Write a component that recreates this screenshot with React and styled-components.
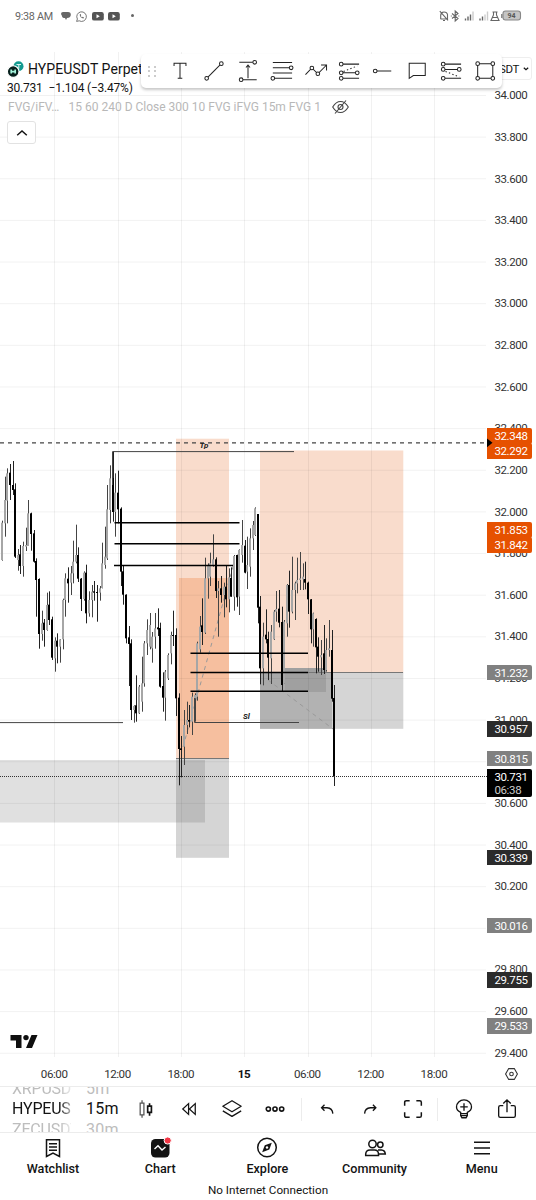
import React from "react";
import styled, { createGlobalStyle, css } from "styled-components";

const GlobalStyle = createGlobalStyle`
  * {
    box-sizing: border-box;
  }
  body {
    margin: 0;
    background: #fff;
    color: #131313;
    font-family: Roboto, "Liberation Sans", sans-serif;
  }
`;

const Page = styled.div`
  display: flex;
  flex-direction: column;
  width: 536px;
  height: 1200px;
  overflow: hidden;
  background: #fff;
`;

const StatusBar = styled.header`
  display: flex;
  justify-content: space-between;
  align-items: center;
  height: 32px;
  padding: 0 15px 0 15px;
  color: #666;
  flex: none;
`;

const StatusGroup = styled.div`
  display: flex;
  align-items: center;
  gap: ${(p) => p.$gap}px;
`;

const Clock = styled.span`
  font-size: 10.8px;
  letter-spacing: -0.3px;
  width: 40px;
  margin-right: 0.5px;
  white-space: nowrap;
`;

const Glyph = styled.svg`
  display: block;
  flex: none;
  fill: none;
  stroke: currentColor;
  stroke-width: ${(p) => p.$weight || 1.1};
  overflow: visible;
`;

const ChartArea = styled.main`
  position: relative;
  height: 1054px;
  flex: none;
`;

const Plot = styled.svg`
  display: block;
  position: absolute;
  left: 0;
  top: 0;
`;

const Legend = styled.section`
  position: relative;
  display: flex;
  flex-direction: column;
  align-items: flex-start;
  padding: 28px 0 0 7px;
`;

const SymbolRow = styled.div`
  display: flex;
  align-items: center;
  gap: 4px;
  height: 18px;
  font-size: 14px;
  letter-spacing: 0.07px;
  white-space: nowrap;
`;

const QuoteRow = styled.div`
  display: flex;
  gap: 6px;
  height: 18px;
  line-height: 20px;
  font-size: 12px;
  letter-spacing: -0.22px;
  white-space: pre;
`;

const StudyRow = styled.div`
  display: flex;
  align-items: center;
  height: 21px;
  padding-left: 1px;
  font-size: 12px;
  color: #b8b8b8;
  white-space: nowrap;
`;

const StudyName = styled.span`
  width: 60.5px;
`;

const StudyInputs = styled.span`
  width: 263.5px;
`;

const CollapseButton = styled.button`
  display: grid;
  place-items: center;
  width: 29px;
  height: 23px;
  margin-top: 4px;
  padding: 0;
  border: 1px solid #e2e2e2;
  border-radius: 3px;
  background: #fff;
  color: #131313;
`;

const DrawingBar = styled.div`
  position: absolute;
  left: 141px;
  top: 22px;
  width: 361px;
  height: 34px;
  display: flex;
  align-items: center;
  padding: 0 0 0 6px;
  border-radius: 5px;
  background: #fff;
  box-shadow: 0 2px 3px rgba(0, 0, 0, 0.22);
  color: #222;
`;

const ToolButton = styled.span`
  display: grid;
  place-items: center;
  width: 33.9px;
  height: 28px;
`;

const Handle = styled.span`
  display: grid;
  grid-template-columns: repeat(2, 2px);
  gap: 2.5px 4px;
  margin: 0 7px 0 1px;
  i {
    width: 2px;
    height: 2px;
    border-radius: 1px;
    background: #bbb;
  }
`;

const Currency = styled.div`
  position: absolute;
  right: 4px;
  top: 25px;
  width: 60px;
  height: 23px;
  display: flex;
  align-items: center;
  justify-content: flex-end;
  gap: 4px;
  padding-right: 2px;
  border: 1px solid #eee;
  border-radius: 3px;
  font-size: 11.5px;
  letter-spacing: -0.4px;
`;

const PriceScale = styled.div`
  position: absolute;
  right: 0;
  top: 43.3px;
  width: 50px;
  padding-left: 8.4px;
`;

const PriceTick = styled.div`
  height: 41.64px;
  line-height: 41.64px;
  font-size: 11.5px;
  letter-spacing: -0.4px;
  color: #333;
`;

const tones = { orange: "#e65100", grey: "#808080", dark: "#2b2b2b", black: "#000" };

const PriceTag = styled.div`
  position: absolute;
  left: 487px;
  top: ${(p) => p.$y - 32}px;
  width: 44.5px;
  height: ${(p) => (p.$tall ? 28 : 15.4)}px;
  padding-left: 7.4px;
  border-radius: 0 2px 2px 0;
  background: ${(p) => tones[p.$tone]};
  color: #fff;
  font-size: 11.5px;
  line-height: 16.8px;
  letter-spacing: -0.35px;
  ${(p) =>
    p.$tall &&
    css`
      line-height: 13px;
      padding-top: 1.5px;
    `}
  small {
    display: block;
    font-size: 11.5px;
    color: #ccc;
  }
`;

const TimeScale = styled.div`
  position: absolute;
  left: 22.5px;
  right: 0;
  bottom: 0;
  height: 25px;
  display: grid;
  grid-template-columns: repeat(7, 63.3px) 1fr;
  align-items: center;
  justify-items: center;
  font-size: 11.6px;
  letter-spacing: -0.45px;
  color: #333;
  b {
    font-weight: 700;
    color: #131313;
  }
`;

const ScaleSettings = styled.span`
  margin-left: 21px;
`;

const BottomBar = styled.div`
  display: flex;
  align-items: center;
  height: 47px;
  flex: none;
  border-top: 1px solid #ececec;
  border-bottom: 1px solid #ececec;
  padding-left: 12px;
`;

const Wheel = styled.div`
  display: flex;
  flex-direction: column;
  justify-content: center;
  width: ${(p) => p.$width}px;
  margin-right: ${(p) => p.$after}px;
  height: 45px;
  overflow: hidden;
  font-size: 16px;
  line-height: 20.5px;
  letter-spacing: ${(p) => p.$track || 0}px;
  white-space: nowrap;
  -webkit-mask-image: ${(p) => (p.$fade ? "linear-gradient(to right, #000 80%, transparent 110%)" : "none")};
`;

const WheelItem = styled.span`
  flex: none;
  height: 20.5px;
  color: ${(p) => (p.$active ? "#131313" : "#bdbdbd")};
`;

const BarButton = styled.span`
  display: grid;
  place-items: center;
  width: 43px;
  height: 44px;
  padding-bottom: 2px;
`;

const Separator = styled.span`
  width: 1px;
  height: 23px;
  margin: 0 ${(p) => p.$right}px 0 ${(p) => p.$left}px;
  background: #ececec;
`;

const TabBar = styled.nav`
  display: grid;
  grid-template-columns: repeat(5, 107.2px);
  height: 46px;
  flex: none;
  margin-left: -0.6px;
`;

const Tab = styled.a`
  display: flex;
  flex-direction: column;
  align-items: center;
  padding-top: 3px;
  font-size: 12.6px;
  font-weight: 500;
  line-height: 16px;
  color: #131313;
  gap: 1px;
`;

const Offline = styled.footer`
  height: 22px;
  line-height: 22px;
  text-align: center;
  font-size: 11.7px;
`;

/* candles: [high, low, bodyTop, bodyBottom, down], in thirds of a pixel below `top` */
const segments = [
  {
    top: 430,
    rows: [
      [272, 392, 278, 390], [140, 320, 210, 280], [115, 280, 130, 212], [102, 210, 128, 165, 1],
      [93, 195, 165, 180, 1], [160, 384, 178, 380, 1], [357, 422, 375, 390], [345, 432, 373, 408, 1],
      [335, 440, 348, 408], [293, 363, 345, 350], [210, 348, 250, 348], [248, 362, 250, 312, 1],
      [300, 398, 310, 395, 1], [385, 560, 393, 450, 1], [445, 656, 447, 612, 1], [542, 632, 580, 612],
      [567, 650, 578, 600, 1], [488, 602, 525, 600], [484, 585, 524, 570, 1], [560, 690, 568, 683, 1],
      [622, 725, 632, 685], [610, 700, 632, 650, 1], [627, 698, 628, 650], [506, 658, 510, 628],
      [430, 560, 445, 510], [412, 518, 446, 460, 1], [408, 495, 430, 458], [332, 460, 395, 430],
      [284, 400, 375, 395], [352, 456, 375, 446, 1], [444, 543, 446, 507, 1], [424, 512, 428, 507],
      [404, 580, 428, 550, 1], [484, 560, 510, 550], [465, 562, 485, 510], [453, 512, 484, 488, 1],
      [465, 575, 486, 489, 1], [468, 512, 475, 488], [338, 475, 400, 474], [290, 416, 380, 405],
      [165, 390, 238, 385], [106, 280, 145, 240], [64, 275, 144, 246, 1], [130, 320, 188, 246],
      [122, 280, 188, 238, 1], [232, 468, 236, 425, 1], [408, 524, 424, 494, 1], [493, 640, 494, 625, 1],
    ],
  },
  {
    top: 520,
    rows: [
      [318, 498, 352, 372, 1], [358, 600, 370, 570, 1], [556, 608, 558, 570], [466, 605, 556, 580, 1],
      [495, 582, 500, 580], [410, 575, 490, 545], [363, 500, 370, 490], [298, 405, 330, 370],
      [279, 388, 315, 380], [336, 428, 350, 385], [279, 386, 325, 350], [265, 348, 322, 328, 1],
      [308, 503, 324, 500, 1], [457, 575, 498, 533, 1], [450, 602, 455, 533], [400, 480, 405, 475],
      [335, 433, 345, 400], [272, 378, 345, 348, 1], [325, 588, 345, 535, 1],
    ],
  },
  {
    top: 630,
    rows: [
      [190, 466, 203, 357, 1], [318, 442, 355, 360, 1], [240, 405, 285, 350], [215, 312, 270, 285],
      [225, 292, 270, 275, 1], [188, 315, 200, 275], [190, 275, 195, 205], [35, 212, 40, 200],
    ],
  },
  {
    top: 520,
    rows: [
      [288, 398, 320, 388], [235, 375, 316, 336, 1], [113, 342, 175, 338], [130, 236, 135, 175],
      [98, 198, 130, 170], [43, 140, 118, 135], [112, 234, 118, 213, 1], [183, 350, 205, 213],
      [168, 248, 205, 225, 1], [188, 292, 200, 225], [138, 262, 200, 238, 1], [145, 277, 172, 238],
      [142, 230, 174, 230, 1], [105, 272, 108, 230], [104, 260, 105, 232, 1], [88, 285, 90, 230],
      [0, 128, 75, 105], [60, 160, 77, 158, 1], [50, 207, 135, 155], [25, 170, 55, 140],
      [3, 90, 15, 55], [-38, 48, -35, 45], [-18, 310, -18, 263, 1],
    ],
  },
  {
    top: 540,
    rows: [
      [168, 433, 200, 385, 1], [248, 436, 290, 385], [208, 310, 284, 298, 1], [275, 420, 297, 353, 1],
      [255, 432, 275, 355], [210, 300, 215, 298], [153, 245, 207, 215], [150, 262, 206, 248, 1],
      [200, 455, 246, 435, 1], [240, 430, 245, 430], [132, 290, 135, 250], [92, 263, 135, 215, 1],
      [50, 220, 150, 215], [125, 240, 130, 150], [53, 160, 120, 130], [36, 150, 115, 120],
      [70, 150, 110, 118], [65, 148, 117, 128, 1], [125, 222, 128, 178, 1], [177, 310, 178, 268, 1],
      [218, 320, 220, 268], [235, 400, 237, 322, 1], [292, 395, 320, 350, 1], [300, 405, 345, 352],
      [255, 402, 340, 390, 1], [295, 395, 330, 390], [240, 350, 325, 330], [270, 485, 330, 476, 1],
      [435, 738, 474, 710, 1],
    ],
  },
];

const candles = segments
  .flatMap(({ top, rows }) =>
    rows.map(([high, low, open, close, down]) => ({
      high: top + high / 3,
      low: top + low / 3,
      open: top + open / 3,
      close: top + close / 3,
      down,
    }))
  )
  .map((c, i) => ({ ...c, x: 2 + i * 2.637 }));

const prices = Array.from({ length: 24 }, (_, i) => (34 - i * 0.2).toFixed(3));
// ticks that a price tag hides completely
const hiddenTicks = ["30.800", "30.000"];
const gridX = [54.5, 118.5, 181.5, 244.5, 308.5, 371.5, 434.5];

const tags = [
  [428.2, "32.348", "orange"],
  [443.4, "32.292", "orange"],
  [522.2, "31.853", "orange"],
  [537.2, "31.842", "orange"],
  [664.6, "31.232", "grey"],
  [721.2, "30.957", "dark"],
  [751, "30.815", "grey"],
  [850, "30.339", "dark"],
  [917.8, "30.016", "grey"],
  [972.4, "29.755", "dark"],
  [1018.4, "29.533", "grey"],
];

const levels = [
  [114.5, 239.5, 522.7],
  [114.5, 239.5, 543.7],
  [114, 233, 565.4],
  [190.5, 308, 653.3],
  [190.5, 308, 672.5],
  [190.5, 308, 691.3],
];

const PriceChart = () => (
  <Plot width="536" height="1054" viewBox="0 32 536 1054">
    <rect x="176" y="438.7" width="53" height="320" fill="#f9dccc" />
    <rect x="179" y="578" width="50" height="180.5" fill="#f6bf9f" />
    <rect x="0" y="760" width="205" height="62.5" fill="#e0e0e0" />
    <rect x="176" y="758.5" width="53" height="99.3" fill="#d5d5d5" />
    <rect x="176" y="760" width="29" height="62.5" fill="#bcbcbc" />
    <rect x="260" y="450.5" width="143.3" height="222" fill="#f9dccc" />
    <rect x="260" y="672" width="143.3" height="56.8" fill="#d5d5d5" />
    <rect x="260" y="672" width="72" height="56.8" fill="#b2b2b2" />
    <rect x="285" y="668" width="41" height="24" fill="#a0a0a0" />
    <rect x="260" y="672" width="25" height="20" fill="#a9a9a9" />
    <g stroke="#000" strokeOpacity="0.055">
      {prices.map((p, i) => (
        <line key={p} x1="0" x2="486" y1={95.5 + i * 41.64} y2={95.5 + i * 41.64} />
      ))}
      {gridX.map((x) => (
        <line key={x} x1={x} x2={x} y1="52" y2="1057" />
      ))}
    </g>
    <g stroke="#777">
      <line x1="176" x2="229" y1="758.5" y2="758.5" />
      <line x1="260" x2="403" y1="672.5" y2="672.5" />
      <g strokeDasharray="4 4" stroke="#999">
        <line x1="183" x2="234" y1="747" y2="563" />
        <line x1="268" x2="333" y1="680" y2="729" />
      </g>
    </g>
    <g>
      {candles.map((c) => {
        const left = Math.round(c.x) - 1;
        return (
          <g key={c.x}>
            <rect x={left + 1} y={c.high} width="1" height={c.low - c.high} fill={c.down ? "#222" : "#444"} />
            <rect
              x={left}
              y={c.open}
              width="2"
              height={Math.max(1, c.close - c.open)}
              fill={c.down ? "#000" : "#a6a6a6"}
            />
          </g>
        );
      })}
    </g>
    <g stroke="#000" strokeWidth="1.5">
      {levels.map(([x1, x2, y]) => (
        <line key={y} x1={x1} x2={x2} y1={y} y2={y} />
      ))}
    </g>
    <g stroke="#444" fill="none">
      <path d="M112.5 485V451.6H294" />
      <path d="M194.5 698V722.5H299" />
      <path d="M0 722.6H123" />
      <path d="M0 442.8H487" strokeDasharray="4 4" strokeWidth="1.2" />
      <path d="M0 776.5H487" strokeDasharray="1 1" stroke="#333" />
    </g>
    <g fontSize="8" fontWeight="700" fontStyle="italic" fill="#222">
      <text x="199.5" y="448">Tp</text>
      <text x="243" y="719.3">Sl</text>
    </g>
    <path fill="#0f0f0f" d="M10.5 1035H21.5V1048H16V1040.5H10.5ZM31.5 1035H37.5L32 1048H26Z" />
    <circle cx="26" cy="1037.6" r="2.7" fill="#0f0f0f" />
  </Plot>
);

const Icon = ({ size = 24, weight, children }) => (
  <Glyph width={size} height={size} viewBox="0 0 24 24" $weight={weight}>
    {children}
  </Glyph>
);

const Knob = ({ x, y }) => <circle cx={x} cy={y} r="2" fill="#fff" />;

const tools = [
  <path key="text" d="M5.5 6.5V3.5H18.5V6.5M12 3.5V20M9.5 20H14.5" />,
  <g key="trend">
    <path d="M4 20L20 4" />
    <Knob x={4} y={20} />
    <Knob x={20} y={4} />
  </g>,
  <g key="range">
    <path d="M2.5 2.5H19M5 21.5H21.5M12 20V6M9.8 8.2L12 5.5L14.2 8.2" />
    <Knob x={19.3} y={2.5} />
    <Knob x={4.5} y={21.5} />
  </g>,
  <g key="fib">
    <path d="M2 2.8H23M2 8.5H20.5M2 14.3H23M2 20H23" />
    <Knob x={22} y={8.5} />
    <Knob x={2} y={20} />
  </g>,
  <g key="wave">
    <path d="M.5 16L7.5 8.7L14 15L23 6M17.5 5.5H23.5V11.5" />
    <Knob x={7.5} y={8.7} />
    <Knob x={14} y={15} />
  </g>,
  <g key="long">
    <path d="M3 4.5H23M3 14H20M3 20H23" />
    <path d="M6 12.5L21 6.5" strokeDasharray="1.5 2.5" />
    <Knob x={3.5} y={4.5} />
    <Knob x={3.5} y={14} />
    <Knob x={21} y={14} />
    <Knob x={3.5} y={20} />
  </g>,
  <g key="ray">
    <path d="M3.5 12H21" />
    <Knob x={3.5} y={12} />
  </g>,
  <path key="note" d="M3.5 3.5H21V17H8L3.5 20Z" />,
  <g key="short">
    <path d="M3 4.5H23M3 10.3H20M3 20H23" />
    <path d="M6 12.5L21 18.5" strokeDasharray="1.5 2.5" />
    <Knob x={3.5} y={4.5} />
    <Knob x={3.5} y={10.3} />
    <Knob x={21} y={10.3} />
    <Knob x={3.5} y={20} />
  </g>,
  <g key="rect">
    <path d="M4 4H20.5V20H4Z" />
    <Knob x={4} y={4} />
    <Knob x={20.5} y={4} />
    <Knob x={4} y={20} />
    <Knob x={20.5} y={20} />
  </g>,
];

const PairLogo = () => (
  <Glyph width="17" height="17" viewBox="0 0 17 17">
    <circle cx="11.5" cy="5.2" r="5" fill="#149a90" stroke="none" />
    <path d="M9.5 3.5H14M11.8 3.5V7.5" stroke="#d7f3ef" />
    <circle cx="6.2" cy="10.6" r="5.8" fill="#06201c" stroke="#fff" />
    <path d="M4.2 8.6V12.6M8.2 8.6V12.6M4.2 10.6H8.2" stroke="#a5f5dc" strokeWidth="1.7" />
  </Glyph>
);

const StatusIcons = () => (
  <>
    <StatusGroup $gap={5}>
      <Clock>9:38 AM</Clock>
      <Glyph width="10" height="10" viewBox="0 0 10 10">
        <path d="M2 1H7Q10 1 9.8 4Q9.5 7 6 7L5 9L4 7Q1 7 1 5L0 3Q0 1 2 1" fill="#666" stroke="none" />
      </Glyph>
      <Glyph width="11" height="11" viewBox="0 0 11 11" $weight={0.9}>
        <path d="M.6 10.4L1.4 8A4.8 4.8 0 1 1 3.2 9.8Z" />
        <path d="M3.8 3.2Q3.5 6.8 7.5 7.5L8 6.5L6.6 5.7L6 6.4L4.6 5L5.2 4.3L4.6 3Z" fill="#666" stroke="none" />
      </Glyph>
      {[0, 1].map((n) => (
        <Glyph key={n} width="11.5" height="9" viewBox="0 0 11.5 9">
          <rect width="11.8" height="8.6" rx="2.2" fill="#555" stroke="none" />
          <path d="M4.5 2.2V6.2L7.8 4.2Z" fill="#fff" stroke="none" />
        </Glyph>
      ))}
      <Glyph width="14" height="4" viewBox="0 0 14 4">
        <circle cx="7.5" cy="1.6" r="1.5" fill="#666" stroke="none" />
      </Glyph>
    </StatusGroup>
    <StatusGroup $gap={0}>
      <Glyph width="82" height="12" viewBox="0 0 82 12">
        <path d="M1.5 9H8.5V4.5Q8 2 5 2Q2 2 1.7 5V9M4 10.5H6M.8 1.2L9 10.3" />
        <path d="M13 3.5L19 8.5L16.2 11V1L19 3.5L13 8.5M11.8 6H12.8M19.3 6H20.3" />
        <path d="M26.5 10.5V8.5M29 10.5V6.5M31.5 10.5V4.5M41 10.5V8.5M43.5 10.5V6.5" strokeWidth="1.4" />
        <path d="M34 10.5V1.5M46 10.5V4.5M48.5 10.5V1.5" stroke="#ccc" strokeWidth="1.4" />
        <path d="M53.5 2H58.5M54.5 2V5L52 10.5H60L57.5 5V2M53.5 7.5H58.5" />
        <rect x="64" y="1" width="17.5" height="9" rx="2.5" fill="#c4c4c4" stroke="#888" />
        <path d="M62.8 4V8" />
        <text x="68.5" y="8" fontSize="7" fontWeight="700" fill="#555" stroke="none">
          94
        </text>
      </Glyph>
    </StatusGroup>
  </>
);

const App = () => {
  return (
    <Page>
      <GlobalStyle />
      <StatusBar>
        <StatusIcons />
      </StatusBar>
      <ChartArea>
        <PriceChart />
        <Legend>
          <SymbolRow>
            <PairLogo />
            HYPEUSDT Perpetual
          </SymbolRow>
          <QuoteRow>
            <span>30.731</span>
            <span>−1.104 (−3.47%)</span>
          </QuoteRow>
          <StudyRow>
            <StudyName>FVG/iFV…</StudyName>
            <StudyInputs>15 60 240 D Close 300 10 FVG iFVG 15m FVG 1</StudyInputs>
            <Glyph width="17" height="14" viewBox="0 0 17 14" color="#444">
              <path d="M.7 7Q4 1.5 8.5 1.5T16.3 7Q13 12.5 8.5 12.5T.7 7ZM3 13.5L14 .5" />
              <circle cx="8.5" cy="7" r="2.5" />
            </Glyph>
          </StudyRow>
          <CollapseButton>
            <Glyph width="12" height="8" viewBox="0 0 12 8" $weight={1.5}>
              <path d="M1.2 6.2L6 2L10.8 6.2" />
            </Glyph>
          </CollapseButton>
        </Legend>
        <Currency>
          USDT
          <Glyph width="6" height="4" viewBox="0 0 6 4" $weight={1.2}>
            <path d="M.8 .8L3 2.8L5.2 .8" />
          </Glyph>
        </Currency>
        <DrawingBar>
          <Handle>
            {Array.from({ length: 6 }, (_, i) => (
              <i key={i} />
            ))}
          </Handle>
          {tools.map((tool, i) => (
            <ToolButton key={i}>
              <Icon size={22}>{tool}</Icon>
            </ToolButton>
          ))}
        </DrawingBar>
        <PriceScale>
          {prices.map((p) => (
            <PriceTick key={p}>{hiddenTicks.includes(p) ? null : p}</PriceTick>
          ))}
        </PriceScale>
        {tags.map(([y, label, tone]) => (
          <PriceTag key={label} $y={y} $tone={tone}>
            {label}
          </PriceTag>
        ))}
        <PriceTag $y={769} $tone="black" $tall>
          30.731
          <small>06:38</small>
        </PriceTag>
        <Plot width="536" height="500" viewBox="0 32 536 500" pointerEvents="none">
          <path d="M487 438.5L492.5 442.8L487 447.3Z" fill="#000" />
        </Plot>
        <TimeScale>
          <span>06:00</span>
          <span>12:00</span>
          <span>18:00</span>
          <b>15</b>
          <span>06:00</span>
          <span>12:00</span>
          <span>18:00</span>
          <ScaleSettings>
            <Glyph width="13" height="12" viewBox="0 0 13 12">
              <path d="M3.7 .6H9.3L12.4 6L9.3 11.4H3.7L.6 6Z" />
              <circle cx="6.5" cy="6" r="1.8" />
            </Glyph>
          </ScaleSettings>
        </TimeScale>
      </ChartArea>
      <BottomBar>
        <Wheel $width={59} $after={15} $track={-0.2} $fade>
          <WheelItem>XRPUSDT</WheelItem>
          <WheelItem $active>HYPEUSDT</WheelItem>
          <WheelItem>ZECUSDT</WheelItem>
        </Wheel>
        <Wheel $width={38.7} $after={0} $track={0.3}>
          <WheelItem>5m</WheelItem>
          <WheelItem $active>15m</WheelItem>
          <WheelItem>30m</WheelItem>
        </Wheel>
        <BarButton>
          <Icon size={20} weight={1.5}>
            <path d="M5 5H9.5V19H5ZM7.25 1.5V5M7.25 19V22.5" stroke="#555" />
            <path d="M14 8.5H18.5V16H14ZM16.25 5V8.5M16.25 16V20" strokeWidth="2" />
          </Icon>
        </BarButton>
        <BarButton>
          <Icon size={20} weight={1.5}>
            <path d="M11.5 5.5V18.5L4.5 12ZM19.5 5.5V18.5L12.5 12Z" />
          </Icon>
        </BarButton>
        <BarButton>
          <Icon size={22} weight={1.4}>
            <path d="M12 3L22 9L12 15L2 9ZM2 14L12 20L22 14" strokeLinejoin="round" />
          </Icon>
        </BarButton>
        <BarButton>
          <Icon size={20} weight={1.9}>
            <circle cx="4" cy="12" r="2.5" />
            <circle cx="12" cy="12" r="2.5" />
            <circle cx="20" cy="12" r="2.5" />
          </Icon>
        </BarButton>
        <Separator $left={4} $right={3.5} />
        <BarButton>
          <Icon size={20} weight={1.6}>
            <path d="M9 7L5.5 10.5L9 14M5.5 10.5H12Q18.5 11 19 17.5" />
          </Icon>
        </BarButton>
        <BarButton>
          <Icon size={20} weight={1.6}>
            <path d="M15.5 7L19 10.5L15.5 14M19 10.5H12.5Q6 11 5.5 17.5" />
          </Icon>
        </BarButton>
        <BarButton>
          <Icon size={20} weight={1.8}>
            <path d="M2 8V4Q2 2 4 2H8M16 2H20Q22 2 22 4V8M22 16V20Q22 22 20 22H16M8 22H4Q2 22 2 20V16" />
          </Icon>
        </BarButton>
        <Separator $left={3} $right={4.5} />
        <BarButton>
          <Icon size={20} weight={1.6}>
            <path d="M8 17.5V16Q3 13.5 3 9.5A9 8.5 0 0 1 21 9.5Q21 13.5 16 16V17.5ZM8 17.5V20L9.5 22.5H14.5L16 20V17.5M8 20H16M12 5V14M7.5 9.5H16.5" />
          </Icon>
        </BarButton>
        <BarButton>
          <Icon size={20} weight={1.6}>
            <path d="M7.5 8H4Q2 8 2 10V20Q2 22 4 22H20Q22 22 22 20V10Q22 8 20 8H16.5M12 16V1.5M7.5 5.5L12 1L16.5 5.5" />
          </Icon>
        </BarButton>
      </BottomBar>
      <TabBar>
        <Tab>
          <Icon size={24} weight={1.5}>
            <path d="M5.5 3.7H18.5V20.5L12 17L5.5 20.5ZM8 7.7H16M8 11H16M8 14.2H16" />
          </Icon>
          Watchlist
        </Tab>
        <Tab>
          <Icon size={24} weight={1.4}>
            <rect x="3" y="3" width="18.5" height="18.5" rx="4.5" fill="#131313" stroke="none" />
            <path d="M6.5 13L10 9.8L14 14L17.5 11" stroke="#fff" />
            <circle cx="19.7" cy="4.5" r="3.6" fill="#f23645" stroke="#fff" strokeWidth="1" />
          </Icon>
          Chart
        </Tab>
        <Tab>
          <Icon size={24} weight={1.5}>
            <circle cx="12" cy="11.5" r="9.3" />
            <path d="M16.8 6.7L14.3 13.5L7.2 16.3L9.8 9.3Z" fill="#131313" stroke="none" />
            <circle cx="12" cy="11.5" r="1.2" fill="#fff" stroke="none" />
          </Icon>
          Explore
        </Tab>
        <Tab>
          <Icon size={24} weight={1.5}>
            <circle cx="9.5" cy="8" r="3.7" />
            <circle cx="17.3" cy="8.7" r="2.7" />
            <path d="M2.7 19.5V18Q3 14 7 14H11.5Q15.3 14 15.5 18V19.5ZM15 14H18.5Q22 14.2 22.3 18H15.5" />
          </Icon>
          Community
        </Tab>
        <Tab>
          <Icon size={24} weight={1.6}>
            <path d="M4 6.3H20M4 12H20M4 17.7H20" />
          </Icon>
          Menu
        </Tab>
      </TabBar>
      <Offline>No Internet Connection</Offline>
    </Page>
  );
};

export default App;
